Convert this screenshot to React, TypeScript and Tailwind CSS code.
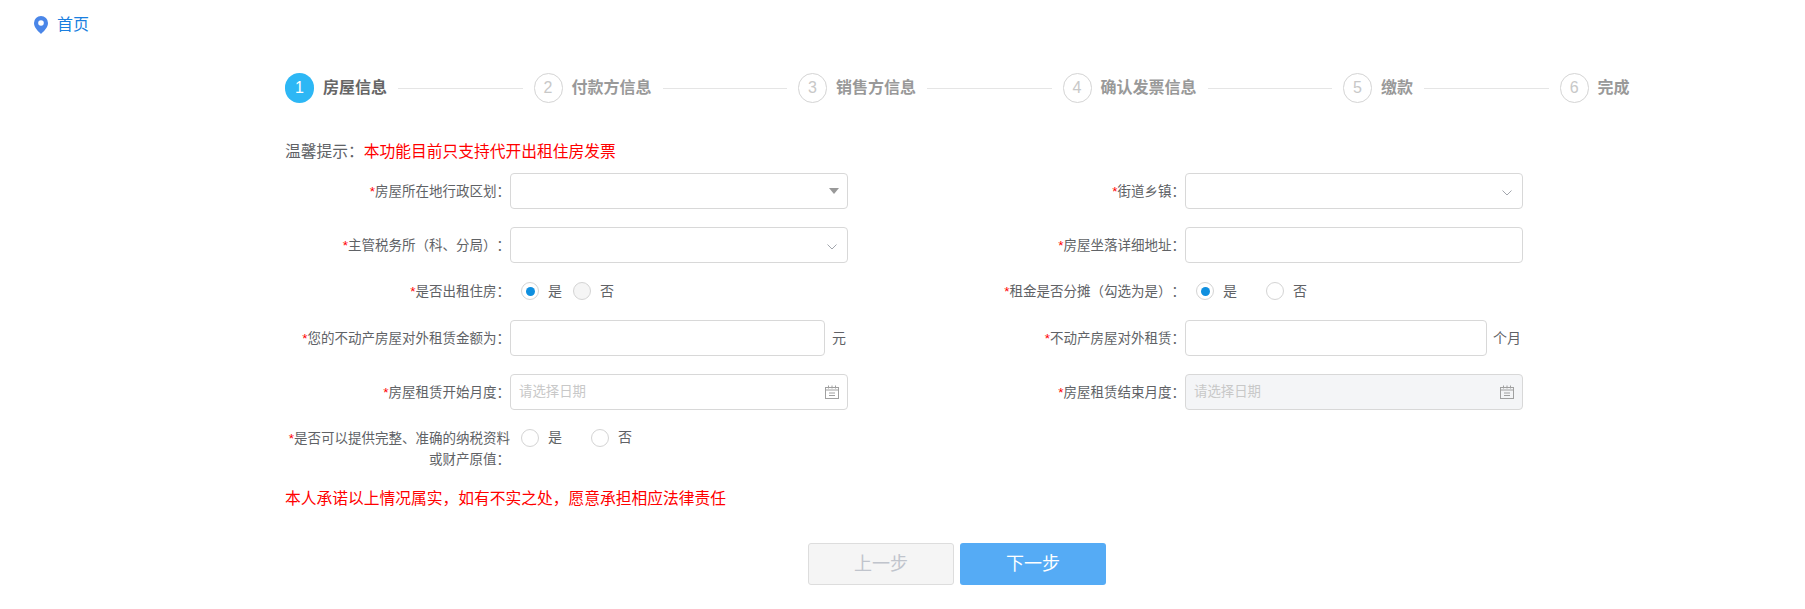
import React from 'react';

const FONT = '[font-family:"Liberation_Sans","Noto_Sans_CJK_SC",sans-serif]';

const steps = [
  { n: 1, name: '房屋信息' },
  { n: 2, name: '付款方信息' },
  { n: 3, name: '销售方信息' },
  { n: 4, name: '确认发票信息' },
  { n: 5, name: '缴款' },
  { n: 6, name: '完成' },
];

const Label: React.FC<{ text: string }> = ({ text }) => (
  <label className="w-[225px] shrink-0 text-right text-[13.5px] leading-[21px] text-[#606266] [text-spacing-trim:space-all]">
    <span className="text-[#ff0000]">*</span>
    {text}
  </label>
);

const Row: React.FC<{ label: string; center?: boolean; children?: React.ReactNode }> = ({ label, center = true, children }) => (
  <div className={`flex ${center ? 'items-center' : 'items-start'}`}>
    <Label text={label} />
    {children}
  </div>
);

const Box: React.FC<{ w?: string; disabled?: boolean; children?: React.ReactNode }> = ({ w = 'w-[338px]', disabled, children }) => (
  <div className={`${w} h-9 relative flex items-center px-[8px] border border-[#d8d8d8] rounded-[4px] text-[13.4px] ${disabled ? 'bg-[#f4f5f7]' : 'bg-white'}`}>
    {children}
  </div>
);

const Radio: React.FC<{ text: string; checked?: boolean; disabled?: boolean; className?: string }> = ({ text, checked, disabled, className }) => (
  <div className={`flex items-center text-[14px] leading-[21px] text-[#606266] ${className || ''}`}>
    <span className={`w-[18px] h-[18px] mb-px rounded-full border border-[#d4d4d4] flex items-center justify-center ${disabled ? 'bg-[#f5f5f5]' : 'bg-white'}`}>
      {checked && <span className="w-[9px] h-[9px] rounded-full bg-[#0f8fdf]" />}
    </span>
    <span className="ml-[9px] -mt-px">{text}</span>
  </div>
);

const DateIcon = () => (
  <svg className="absolute right-[8px] top-[10px]" width="14" height="14" viewBox="0 0 14 14" fill="none" stroke="#a0a0a0" strokeWidth="1">
    <rect x="0.5" y="2.500" width="13" height="11" />
    <path d="M3.500 0.500v3M7 0.500v3M10.500 0.500v3M0.500 5h13M4 8h6M4 10.500h6" />
  </svg>
);

const Chevron = () => (
  <svg className="absolute right-[10px] top-[16px]" width="10" height="6" viewBox="0 0 10 6" fill="none" stroke="#a2a6ad" strokeWidth="1">
    <path d="M0.500 0.500L5 5L9.500 0.500" />
  </svg>
);

export default function App() {
  return (
    <div className={`${FONT} w-[1805px] h-[609px] overflow-hidden bg-white`}>
      <div className="flex items-center h-[18px] mt-4 ml-[34px]">
        <svg width="14" height="18" viewBox="0 0 14 18">
          <path d="M7 0a7 7 0 0 0-7 7c0 4.500 4 8 7 11 3-3 7-6.500 7-11a7 7 0 0 0-7-7z" fill="#4a86e8" />
          <circle cx="7" cy="7" r="2.800" fill="#fff" />
        </svg>
        <span className="ml-[9px] text-[16px] text-[#1a7fe0]">首页</span>
      </div>

      <div className="ml-[285px] mt-[39px] flex items-center h-[30px]">
        {steps.map((s, i) => (
          <React.Fragment key={s.n}>
            <span className={`w-[29px] h-[30px] rounded-full flex items-center justify-center text-[16px] shrink-0 ${i === 0 ? 'bg-[#2db7f5] text-white' : 'border border-[#d4d4d4] text-[#c8c8c8]'}`}>
              {s.n}
            </span>
            <span className={`ml-[9px] text-[16px] font-bold whitespace-nowrap ${i === 0 ? 'text-[#666666]' : 'text-[#999999]'}`}>{s.name}</span>
            {i < 5 && <span className="mx-[11px] w-[124.5px] h-px bg-[#e5e5e5]" />}
          </React.Fragment>
        ))}
      </div>

      <div className="ml-[285px] mt-[37px]">
        <p className="text-[15.75px] leading-6 text-[#606266]">
          温馨提示：<span className="text-[#ff0000]">本功能目前只支持代开出租住房发票</span>
        </p>

        <div className="mt-[9px] grid grid-cols-[675px_675px] gap-y-[18px]">
          <Row label="房屋所在地行政区划：">
            <Box>
              <span className="absolute right-[8px] top-[14px] w-0 h-0 border-x-[5px] border-x-transparent border-t-[6px] border-t-[#999999]" />
            </Box>
          </Row>
          <Row label="街道乡镇：">
            <Box><Chevron /></Box>
          </Row>

          <Row label="主管税务所（科、分局）：">
            <Box><Chevron /></Box>
          </Row>
          <Row label="房屋坐落详细地址：">
            <Box />
          </Row>

          <Row label="是否出租住房：">
            <div className="flex ml-[11px]">
              <Radio text="是" checked />
              <Radio text="否" disabled className="ml-[11px]" />
            </div>
          </Row>
          <Row label="租金是否分摊（勾选为是）：">
            <div className="flex ml-[11px]">
              <Radio text="是" checked />
              <Radio text="否" className="ml-[29px]" />
            </div>
          </Row>

          <Row label="您的不动产房屋对外租赁金额为：">
            <Box w="w-[315px]" />
            <span className="ml-[7px] text-[14px] text-[#606266]">元</span>
          </Row>
          <Row label="不动产房屋对外租赁：">
            <Box w="w-[302px]" />
            <span className="ml-[6px] text-[14px] text-[#606266]">个月</span>
          </Row>

          <Row label="房屋租赁开始月度：">
            <Box>
              <span className="text-[#c8c8c8]">请选择日期</span>
              <DateIcon />
            </Box>
          </Row>
          <Row label="房屋租赁结束月度：">
            <Box disabled>
              <span className="text-[#c8c8c8]">请选择日期</span>
              <DateIcon />
            </Box>
          </Row>

          <Row label="是否可以提供完整、准确的纳税资料或财产原值：" center={false}>
            <div className="flex ml-[11px]">
              <Radio text="是" />
              <Radio text="否" className="ml-[29px]" />
            </div>
          </Row>
        </div>

        <p className="mt-[17px] text-[15.75px] leading-6 text-[#ff0000]">本人承诺以上情况属实，如有不实之处，愿意承担相应法律责任</p>

        <div className="mt-[32px] ml-[523px] flex gap-[6px]">
          <button className="w-[146px] h-[42px] rounded-[3px] border border-[#dddddd] bg-[#f5f5f5] text-[18px] text-[#c0c4cc]">上一步</button>
          <button className="w-[146px] h-[42px] rounded-[3px] bg-[#55abf5] text-[18px] text-white">下一步</button>
        </div>
      </div>
    </div>
  );
}
